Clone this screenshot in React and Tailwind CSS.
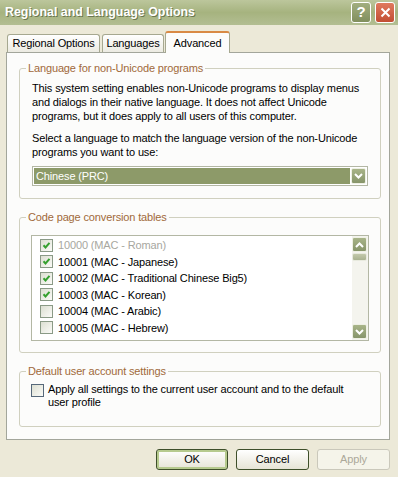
const CODE_PAGES = [
  { label: '10000 (MAC - Roman)', checked: true, disabled: true },
  { label: '10001 (MAC - Japanese)', checked: true },
  { label: '10002 (MAC - Traditional Chinese Big5)', checked: true },
  { label: '10003 (MAC - Korean)', checked: true },
  { label: '10004 (MAC - Arabic)', checked: false },
  { label: '10005 (MAC - Hebrew)', checked: false },
];

const Chevron = ({ up }) => (
  <svg width="9" height="6" viewBox="0 0 9 6" fill="none" stroke="white" strokeWidth="2">
    <path d={up ? 'M1 5l3.5-3.5L8 5' : 'M1 1l3.5 3.5L8 1'} />
  </svg>
);

function OliveButton({ up, className = '' }) {
  return (
    <div
      className={`flex items-center justify-center rounded-[2px] border border-[#eef0e4] bg-linear-to-b from-[#a8b488] to-[#87956a] ${className}`}
    >
      <Chevron up={up} />
    </div>
  );
}

function Checkbox({ checked, dark }) {
  return (
    <span
      className={`flex h-[13px] w-[13px] shrink-0 items-center justify-center border bg-linear-to-br from-[#dcdfd2] to-[#fbfbf8] ${
        dark ? 'border-[#56687a]' : 'border-[#8a9a86]'
      }`}
    >
      {checked && (
        <svg width="9" height="9" viewBox="0 0 9 9" fill="none" stroke="#35a02f" strokeWidth="2">
          <path d="M1.5 4.3l2 2.1 4-4.6" />
        </svg>
      )}
    </span>
  );
}

function Group({ title, className = '', children }) {
  return (
    <div className={`relative w-[362px] rounded-[3px] border border-[#d0d0bf] ${className}`}>
      {/* Group caption sits on the top border */}
      <span className="absolute left-[6px] top-[-8px] bg-[#fcfcfb] px-[2px] leading-[14px] text-[#a0693a]">
        {title}
      </span>
      {children}
    </div>
  );
}

function Tab({ label, active, width }) {
  if (active) {
    return (
      <div
        className={`relative z-10 -mb-[1px] flex h-[22px] items-center justify-center rounded-t-[3px] border-x border-t-2 border-x-[#a6a890] border-t-[#d98a45] bg-[#fcfcfb] ${width}`}
      >
        {label}
      </div>
    );
  }
  return (
    <div
      className={`flex h-[18px] items-center justify-center rounded-t-[3px] border border-b-0 border-[#a6a890] bg-linear-to-b from-white to-[#ecebe2] ${width}`}
    >
      {label}
    </div>
  );
}

export default function App() {
  return (
    <div className="flex h-[477px] w-[398px] flex-col overflow-hidden bg-[#ece9d8] text-[11px] tracking-[-0.14px] text-black [font-family:'Liberation_Sans',Arial,sans-serif]">
      {/* Title bar */}
      <div className="flex h-[25px] shrink-0 items-center bg-linear-to-b from-[#bcc69c] via-[#a6b37f] to-[#b3be92] pl-[5px] pr-[3px]">
        <span className="flex-1 text-[12.4px] font-bold tracking-normal text-white [text-shadow:1px_1px_0_#6b7750]">
          Regional and Language Options
        </span>
        <div className="flex gap-[4px]">
          <div className="flex h-[21px] w-[20px] items-center justify-center rounded-[3px] border border-white bg-linear-to-b from-[#a2ae80] to-[#818f5d] text-[15px] font-bold text-white">
            ?
          </div>
          <div className="flex h-[21px] w-[20px] items-center justify-center rounded-[3px] border border-white bg-linear-to-b from-[#e07a5e] to-[#c24e33]">
            <svg width="11" height="11" viewBox="0 0 11 11" stroke="white" strokeWidth="2">
              <path d="M1.5 1.5l8 8M9.5 1.5l-8 8" />
            </svg>
          </div>
        </div>
      </div>

      {/* Tabs */}
      <div className="flex h-[27px] shrink-0 items-end pl-[7px]">
        <Tab label="Regional Options" width="w-[93px]" />
        <div className="w-[2px]" />
        <Tab label="Languages" width="w-[62px]" />
        <div className="w-[1px]" />
        <Tab label="Advanced" active width="w-[65px]" />
      </div>

      {/* Tab panel */}
      <div className="ml-[6px] h-[388px] w-[384px] shrink-0 border border-[#a3a69b] bg-[#fcfcfb] pl-[12px] pt-[15px]">
        <Group title="Language for non-Unicode programs" className="px-[12px] pb-[12px] pt-[12px]">
          <p className="whitespace-nowrap leading-[14px]">
            This system setting enables non-Unicode programs to display menus
            <br />
            and dialogs in their native language. It does not affect Unicode
            <br />
            programs, but it does apply to all users of this computer.
          </p>
          <p className="mt-[8px] whitespace-nowrap leading-[14px]">
            Select a language to match the language version of the non-Unicode
            <br />
            programs you want to use:
          </p>
          <div className="mt-[7px] flex h-[20px] items-stretch border border-[#b3b7a4] bg-white p-[1px]">
            <div className="flex flex-1 items-center bg-[#8d9a69] pl-[2px] text-white">Chinese (PRC)</div>
            <OliveButton className="ml-[1px] w-[15px]" />
          </div>
        </Group>

        <Group title="Code page conversion tables" className="mt-[18px] px-[11px] pb-[11px] pt-[17px]">
          <div className="flex h-[106px] border border-[#b3b7a4] bg-white">
            <div className="flex-1 pl-[8px] pt-[1px]">
              {CODE_PAGES.map((cp) => (
                <div key={cp.label} className="flex h-[16.5px] items-center gap-[5px]">
                  <Checkbox checked={cp.checked} />
                  <span className={cp.disabled ? 'text-[#a7a7a0]' : ''}>{cp.label}</span>
                </div>
              ))}
            </div>
            {/* Scrollbar */}
            <div className="flex w-[16px] flex-col bg-[#f4f4ee] py-[1px] pr-[1px]">
              <OliveButton up className="h-[15px]" />
              <div className="mt-[1px] h-[8px] rounded-[2px] border border-[#e8eade] bg-linear-to-b from-[#c3c9ab] to-[#a9b290]" />
              <div className="flex-1" />
              <OliveButton className="h-[15px]" />
            </div>
          </div>
        </Group>

        <Group title="Default user account settings" className="mt-[18px] pb-[17px] pl-[11px] pt-[11px]">
          <div className="flex items-start gap-[4px]">
            <span className="mt-[1px]">
              <Checkbox dark />
            </span>
            <span className="leading-[13px]">
              Apply all settings to the current user account and to the default
              <br />
              user profile
            </span>
          </div>
        </Group>
      </div>

      {/* Dialog buttons */}
      <div className="mt-[9px] flex justify-end gap-[8px] pr-[8px]">
        <button className="h-[21px] w-[72px] rounded-[3px] border border-[#3e4f2a] bg-linear-to-b from-white to-[#e6e4d6] shadow-[inset_0_0_0_2px_#b6ca8e]">
          OK
        </button>
        <button className="h-[21px] w-[73px] rounded-[3px] border border-[#3e4f2a] bg-linear-to-b from-white to-[#e6e4d6]">
          Cancel
        </button>
        <button className="h-[21px] w-[73px] rounded-[3px] border border-[#cac8bb] bg-[#f5f4ea] text-[#aca899]">
          Apply
        </button>
      </div>
    </div>
  );
}
